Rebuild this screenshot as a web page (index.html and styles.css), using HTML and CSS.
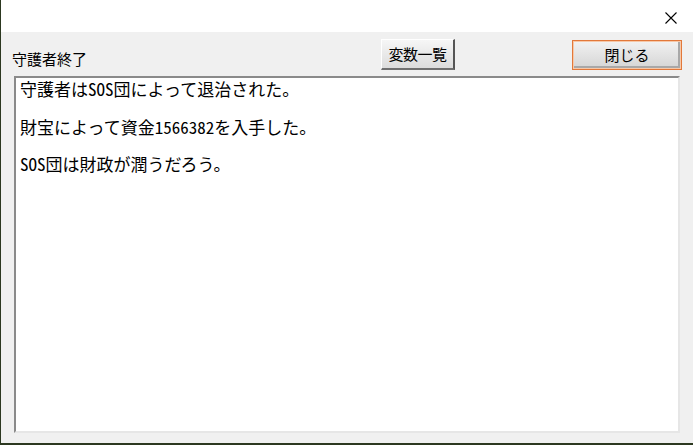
FILE: index.html
```html
<!DOCTYPE html>
<html lang="ja">
<head>
    <meta charset="UTF-8">
    <meta name="viewport" content="width=device-width, initial-scale=1.0">
    <title>守護者終了</title>
    <link rel="stylesheet" href="styles.css">
</head>
<body>
    <div class="window">
        <header class="titlebar">
            <button class="close" aria-label="閉じる">
                <svg width="12" height="12" viewBox="0 0 12 12">
                    <path d="M0.5 0.5 L11.5 11.5 M11.5 0.5 L0.5 11.5" stroke="#000" stroke-width="1.1" fill="none"/>
                </svg>
            </button>
        </header>

        <div class="toolbar">
            <span class="label">守護者終了</span>
            <button class="btn btn-vars">変数一覧</button>
            <button class="btn btn-close">閉じる</button>
        </div>

        <div class="log">
            <p>守護者はSOS団によって退治された。</p>
            <p>財宝によって資金1566382を入手した。</p>
            <p>SOS団は財政が潤うだろう。</p>
        </div>
    </div>
</body>
</html>
```

FILE: styles.css
```css
body, html {
    margin: 0;
    padding: 0;
    background: #2c3820;
    font-family: "Noto Sans CJK JP", "Noto Sans", sans-serif;
    font-size: 15px;
    color: #000;
}

.window {
    width: 692px;
    height: 443px;
    margin-left: 1px;
    background: #f0f0f0;
    display: flex;
    flex-direction: column;
}

.titlebar {
    height: 32px;
    background: #fff;
    display: flex;
    justify-content: flex-end;
}

.close {
    width: 46px;
    height: 32px;
    border: none;
    background: none;
    padding: 4px 0 0 2px;
    display: flex;
    align-items: center;
    justify-content: center;
}

.toolbar {
    height: 44px;
    display: flex;
    align-items: flex-start;
    padding: 7px 11px 0 11px;
    box-sizing: border-box;
}

.label {
    flex: 1;
    align-self: flex-end;
    margin-bottom: 8px;
    line-height: 18px;
}

.btn {
    font-family: inherit;
    font-size: 15px;
    line-height: 18px;
    padding: 0;
    color: #000;
    cursor: default;
}

.btn-vars {
    width: 74px;
    height: 31px;
    margin-right: 117px;
    background: linear-gradient(#f6f6f6, #dcdcdc);
    border-style: solid;
    border-width: 1px 2px 2px 1px;
    border-color: #fff #555 #707070 #fff;
    letter-spacing: -0.5px;
}

.btn-close {
    width: 110px;
    height: 30px;
    margin-top: 1px;
    background: linear-gradient(#f2f2f2, #d4d4d4);
    border: 1px solid #e2783a;
    box-shadow: inset 0 0 0 1px #f6c8a8, inset -1px -1px 0 2px #a8a8a8;
}

.log {
    flex: 1;
    margin: 0 13px 10px 13px;
    background: #fff;
    border-style: solid;
    border-width: 2px;
    border-color: #8a8a8a #e6e6e6 #e6e6e6 #8a8a8a;
    padding: 1px 4px;
    font-size: 17px;
    line-height: 19px;
    font-feature-settings: "hwid" 1;
}

.log p {
    margin: 0 0 18.5px 0;
}
```
